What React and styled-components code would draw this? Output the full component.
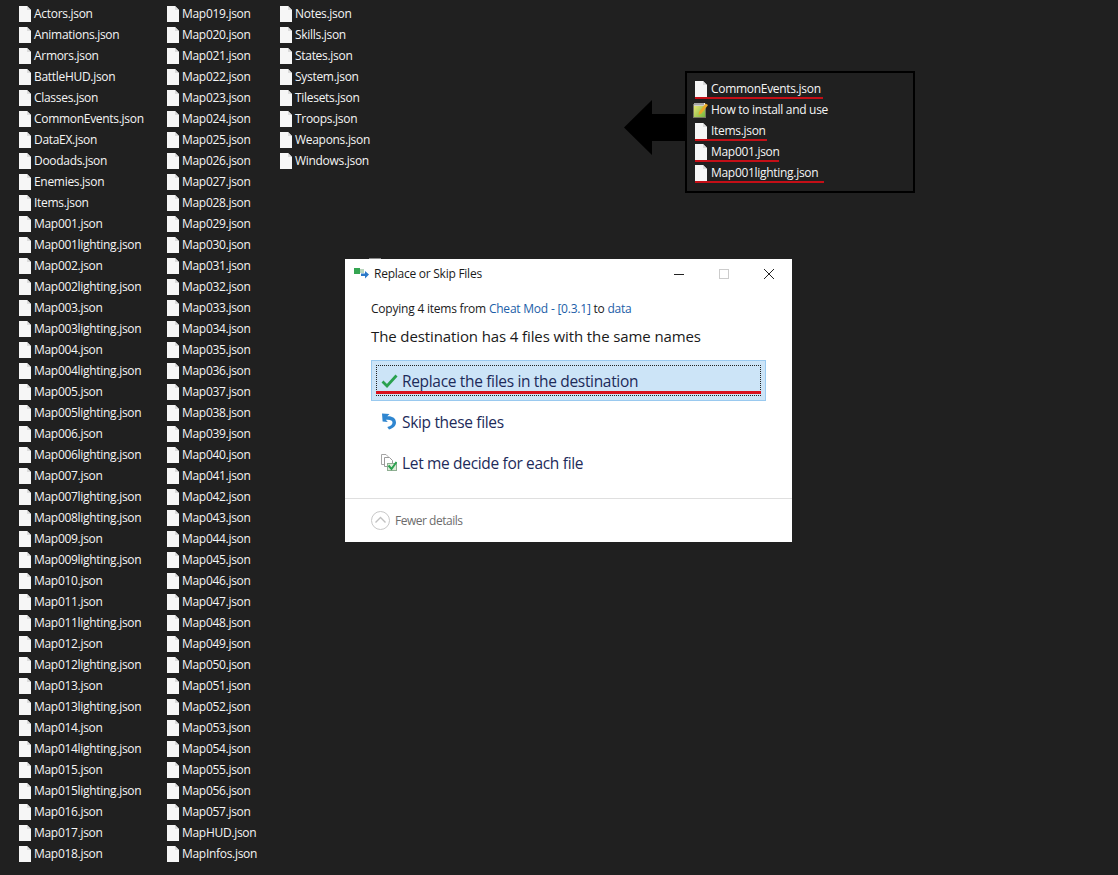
import React from 'react'
import styled, { createGlobalStyle } from 'styled-components'

const GlobalStyle = createGlobalStyle`
  html, body {
    margin: 0;
    padding: 0;
    background: #202020;
  }
  body {
    font-family: "Open Sans", "Noto Sans", "Liberation Sans", sans-serif;
  }
`

const Desktop = styled.div`
  position: relative;
  width: 1118px;
  height: 875px;
  overflow: hidden;
  background: #202020;
`

const Columns = styled.div`
  display: flex;
  padding: 3px 0 0 19px;
`

const Column = styled.ul`
  display: flex;
  flex-direction: column;
  width: ${p => p.$width}px;
  margin: 0;
  padding: 0;
  list-style: none;
`

const Row = styled.li`
  display: flex;
  align-items: center;
  height: 21px;
  white-space: nowrap;
  color: #f5f5f5;
  font-size: 12px;
  letter-spacing: -0.3px;
`

const RowIcon = styled.span`
  display: flex;
  width: ${p => p.$width || 15}px;
  flex: none;
`

// sliver of a file that pokes out above the dialog
const PeekingFile = styled.span`
  position: absolute;
  left: 369px;
  top: 258px;
  width: 12px;
  height: 1px;
  background: #8a8a8a;
`

const Callout = styled.div`
  position: absolute;
  left: 624px;
  top: 71px;
  display: flex;
  align-items: flex-start;
`

const CalloutBox = styled.ul`
  width: 218px;
  height: 113px;
  margin: 0;
  padding: 5px 0 0 8px;
  border: 2px solid #000;
  list-style: none;
  background: #202020;
`

const CalloutRow = styled(Row)`
  position: relative;
  &::after {
    content: '';
    display: ${p => (p.$line ? 'block' : 'none')};
    position: absolute;
    left: 0;
    bottom: 0;
    width: ${p => p.$line}px;
    height: 2px;
    background: #c40f17;
  }
`

const Dialog = styled.section`
  position: absolute;
  left: 345px;
  top: 259px;
  display: flex;
  flex-direction: column;
  width: 447px;
  height: 283px;
  background: #fff;
  color: #1a1a1a;
`

const TitleBar = styled.header`
  display: flex;
  align-items: center;
  height: 29px;
  padding: 0 18px 0 9px;
  font-size: 12px;
  letter-spacing: -0.25px;
`

const TitleText = styled.span`
  flex: 1;
  margin-left: 5px;
`

const WindowControls = styled.div`
  display: flex;
  align-items: center;
  gap: 35px;
`

const Body = styled.div`
  flex: 1;
  padding: 12px 26px 0;
`

const CopyLine = styled.p`
  margin: 0;
  height: 17px;
  line-height: 17px;
  font-size: 12px;
  letter-spacing: -0.22px;
`

const Link = styled.span`
  color: #1c5ea8;
`

const Heading = styled.h2`
  margin: 8px 0 0;
  height: 22px;
  line-height: 22px;
  font-size: 15px;
  font-weight: 400;
  letter-spacing: -0.11px;
`

const Options = styled.div`
  display: flex;
  flex-direction: column;
  margin-top: 13px;
`

const Option = styled.div`
  position: relative;
  display: flex;
  align-items: center;
  box-sizing: border-box;
  height: 41px;
  padding-left: 9px;
  border: 1px solid ${p => (p.$active ? '#99c9ef' : 'transparent')};
  background: ${p => (p.$active ? '#cce4f7' : 'transparent')};
  color: #1d2b5a;
  font-size: 15.5px;
  letter-spacing: -0.33px;
`

const FocusRing = styled.span`
  position: absolute;
  left: 4px;
  right: 4px;
  top: 4px;
  bottom: 4px;
  border: 1px dotted #222;
`

const RedLine = styled.span`
  position: absolute;
  left: 4px;
  right: 4px;
  bottom: 6px;
  height: 3px;
  background: #d9101c;
`

const OptionIcon = styled.span`
  display: flex;
  width: 21px;
  flex: none;
`

const Footer = styled.footer`
  display: flex;
  align-items: center;
  gap: 5px;
  height: 43px;
  padding-left: 26px;
  border-top: 1px solid #dfdfdf;
  color: #6d6d6d;
  font-size: 12px;
  letter-spacing: -0.48px;
`

const FileIcon = () => (
  <svg width="12" height="16" viewBox="0 0 12 16">
    <path d="M0 0H8L12 4V16H0Z" fill="#f6f6f6" />
    <path d="M8 0V4H12Z" fill="#dcdcdc" />
  </svg>
)

const NoteIcon = () => (
  <svg width="15" height="16" viewBox="0 0 15 16" style={{ marginLeft: -2 }}>
    <defs>
      <linearGradient id="noteFill" x1="0" y1="0" x2="1" y2="1">
        <stop offset="0" stopColor="#f2e87a" />
        <stop offset="1" stopColor="#6fb53a" />
      </linearGradient>
    </defs>
    <rect x="0.5" y="2.5" width="12" height="13" fill="url(#noteFill)" stroke="#77775f" />
    <rect x="1" y="1" width="11" height="3" fill="#f4f4f4" />
    <path d="M2 1V3.5M4 1V3.5M6 1V3.5M8 1V3.5M10 1V3.5" stroke="#555" />
    <path d="M6 10L12.5 1.5L15 3L8.5 11.5L5.5 13Z" fill="#eaa928" />
  </svg>
)

const TransferIcon = () => (
  <svg width="15" height="11" viewBox="0 0 15 11">
    <rect x="0" y="0" width="6" height="6" fill="#35a552" />
    <rect x="6" y="1" width="4" height="4" fill="#b9d6be" />
    <path d="M7 5.5H11V3L15 6.5L11 10.5V8H7Z" fill="#2b79c9" />
  </svg>
)

const CheckIcon = () => (
  <svg width="17" height="14" viewBox="0 0 17 14">
    <path d="M1.5 7.5L6 12L15.5 1.5" fill="none" stroke="#2aa14f" strokeWidth="2.8" />
  </svg>
)

const UndoIcon = () => (
  <svg width="16" height="17" viewBox="0 0 16 17">
    <path d="M1 0.5L8.5 1L6.3 3.2C11 2.8 15 5 15 9.5C15 12.5 12.5 15.2 8 16.5L6.3 14C9.8 13 11.5 11.5 11.5 9.5C11.5 7.3 9 6.3 4.8 6.8L6.8 9L1.6 8.6Z" fill="#2f86d0" />
  </svg>
)

const DecideIcon = () => (
  <svg width="16" height="17" viewBox="0 0 16 17">
    <path d="M0.5 0.5H5L7 2.5V10.5H0.5Z" fill="#fff" stroke="#a5a5a5" />
    <path d="M3.5 3.5H8.5L11.5 6.5V12.5H3.5Z" fill="#fff" stroke="#9a9a9a" />
    <rect x="6.5" y="9.5" width="9" height="7" fill="#dcebd8" stroke="#8fae92" />
    <path d="M7.5 11.5L10.5 15L15.5 8" fill="none" stroke="#2aa14f" strokeWidth="2" />
  </svg>
)

const CollapseIcon = () => (
  <svg width="19" height="19" viewBox="0 0 19 19">
    <circle cx="9.5" cy="9.5" r="9" fill="#fff" stroke="#c8c8c8" />
    <path d="M4.5 11.5L9.5 6.5L14.5 11.5" fill="none" stroke="#c0c0c0" strokeWidth="1.4" />
  </svg>
)

const ArrowShape = styled.svg`
  flex: none;
  margin-top: 29px;
`

const Arrow = () => (
  <ArrowShape width="61" height="55" viewBox="0 0 61 55">
    <path d="M0 27.5L28 0V14H61V41H28V55Z" fill="#000" />
  </ArrowShape>
)

const range = (from, to, suffix = '') =>
  Array.from({ length: to - from + 1 }, (_, i) => `Map${String(from + i).padStart(3, '0')}${suffix}.json`)

const columnOne = [
  'Actors.json', 'Animations.json', 'Armors.json', 'BattleHUD.json', 'Classes.json',
  'CommonEvents.json', 'DataEX.json', 'Doodads.json', 'Enemies.json', 'Items.json',
  'Map001.json', 'Map001lighting.json', 'Map002.json', 'Map002lighting.json',
  'Map003.json', 'Map003lighting.json', 'Map004.json', 'Map004lighting.json',
  'Map005.json', 'Map005lighting.json', 'Map006.json', 'Map006lighting.json',
  'Map007.json', 'Map007lighting.json', 'Map008lighting.json', 'Map009.json',
  'Map009lighting.json', 'Map010.json', 'Map011.json', 'Map011lighting.json',
  'Map012.json', 'Map012lighting.json', 'Map013.json', 'Map013lighting.json',
  'Map014.json', 'Map014lighting.json', 'Map015.json', 'Map015lighting.json',
  'Map016.json', 'Map017.json', 'Map018.json',
]

const columnTwo = [...range(19, 57), 'MapHUD.json', 'MapInfos.json']

const columnThree = [
  'Notes.json', 'Skills.json', 'States.json', 'System.json',
  'Tilesets.json', 'Troops.json', 'Weapons.json', 'Windows.json',
]

const calloutFiles = [
  { name: 'CommonEvents.json', line: 128 },
  { name: 'How to install and use', note: true },
  { name: 'Items.json', line: 72 },
  { name: 'Map001.json', line: 84 },
  { name: 'Map001lighting.json', line: 129 },
]

const FileColumn = ({ files, width }) => (
  <Column $width={width}>
    {files.map(name => (
      <Row key={name}>
        <RowIcon><FileIcon /></RowIcon>
        {name}
      </Row>
    ))}
  </Column>
)

const App = () => {
  return (
    <Desktop>
      <GlobalStyle />
      <Columns>
        <FileColumn files={columnOne} width={148} />
        <FileColumn files={columnTwo} width={113} />
        <FileColumn files={columnThree} width={100} />
      </Columns>

      <Callout>
        <Arrow />
        <CalloutBox>
          {calloutFiles.map(file => (
            <CalloutRow key={file.name} $line={file.line}>
              <RowIcon $width={16}>{file.note ? <NoteIcon /> : <FileIcon />}</RowIcon>
              {file.name}
            </CalloutRow>
          ))}
        </CalloutBox>
      </Callout>

      <PeekingFile />
      <Dialog>
        <TitleBar>
          <TransferIcon />
          <TitleText>Replace or Skip Files</TitleText>
          <WindowControls>
            <svg width="10" height="10" viewBox="0 0 10 10"><path d="M0 5.5H10" stroke="#222" /></svg>
            <svg width="10" height="10" viewBox="0 0 10 10"><rect x="0.5" y="0.5" width="9" height="9" fill="none" stroke="#ccc" /></svg>
            <svg width="10" height="10" viewBox="0 0 10 10"><path d="M0 0L10 10M10 0L0 10" stroke="#222" /></svg>
          </WindowControls>
        </TitleBar>
        <Body>
          <CopyLine>
            Copying 4 items from <Link>Cheat Mod - [0.3.1]</Link> to <Link>data</Link>
          </CopyLine>
          <Heading>The destination has 4 files with the same names</Heading>
          <Options>
            <Option $active>
              <FocusRing />
              <RedLine />
              <OptionIcon><CheckIcon /></OptionIcon>
              Replace the files in the destination
            </Option>
            <Option>
              <OptionIcon><UndoIcon /></OptionIcon>
              Skip these files
            </Option>
            <Option>
              <OptionIcon><DecideIcon /></OptionIcon>
              Let me decide for each file
            </Option>
          </Options>
        </Body>
        <Footer>
          <CollapseIcon />
          Fewer details
        </Footer>
      </Dialog>
    </Desktop>
  )
}

export default App
